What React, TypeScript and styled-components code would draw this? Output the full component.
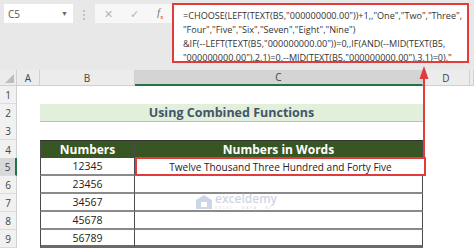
import React from 'react';
import styled, { createGlobalStyle } from 'styled-components';

const GlobalStyle = createGlobalStyle`
  html, body {
    margin: 0;
    padding: 0;
    background: #ffffff;
  }
`;

const COLS = '17px 23px 95px 288px 47px 1fr';

const Page = styled.div`
  position: relative;
  width: 474px;
  height: 250px;
  overflow: hidden;
  background: #ffffff;
  font-family: "Open Sans", "Noto Sans", sans-serif;
`;

const FormulaBar = styled.div`
  display: flex;
  align-items: flex-start;
  height: 70px;
  padding: 3px 0 0 4px;
  box-sizing: border-box;
  background: #e8e8e8;
`;

const NameBox = styled.div`
  display: flex;
  align-items: center;
  justify-content: space-between;
  width: 69px;
  height: 19px;
  margin-top: 1px;
  padding: 0 5px 0 4px;
  box-sizing: border-box;
  background: #ffffff;
  font-size: 10px;
  color: #555;
`;

const Caret = styled.span`
  font-size: 7px;
  color: #666;
`;

const Dots = styled.div`
  display: flex;
  flex-direction: column;
  align-items: center;
  gap: 2px;
  width: 22px;
  margin-top: 7px;

  span {
    width: 2px;
    height: 2px;
    border-radius: 50%;
    background: #b5b5b5;
  }
`;

const ButtonBox = styled.div`
  display: flex;
  align-items: center;
  justify-content: space-around;
  width: 77px;
  height: 19px;
  margin-top: 1px;
  background: #f7f7f7;
  color: #b5b5b5;
  font-size: 11px;
`;

const Fx = styled.span`
  font-family: "Liberation Serif", serif;
  font-style: italic;
  font-size: 11px;
  color: #777;

  sub {
    font-size: 6px;
    color: #d33;
    font-style: normal;
  }
`;

const FormulaBox = styled.div`
  width: 297px;
  height: 60px;
  padding: 4px 0 0 9px;
  box-sizing: border-box;
  overflow: hidden;
  background: #ffffff;
  border: 2px solid #e23b3b;
  font-family: "Open Sans", sans-serif;
  font-size: 9.1px;
  line-height: 14px;
  color: #333;
  white-space: pre;
`;

const Row = styled.div<{ $h?: number }>`
  display: grid;
  grid-template-columns: ${COLS};
  height: ${(p) => p.$h ?? 18}px;
`;

const ColHead = styled.div<{ $active?: boolean }>`
  display: flex;
  align-items: center;
  justify-content: center;
  background: ${(p) => (p.$active ? '#d4d4d4' : '#ececec')};
  border-right: 1px solid #d0d0d0;
  border-bottom: ${(p) => (p.$active ? '2px solid #217346' : '1px solid #cfcfcf')};
  box-sizing: border-box;
  font-size: 10px;
  color: #444;
`;

const Corner = styled(ColHead)`
  justify-content: flex-end;
  align-items: flex-end;
  padding: 0 2px 2px 0;
`;

const RowHead = styled.div<{ $active?: boolean }>`
  display: flex;
  align-items: center;
  justify-content: center;
  background: ${(p) => (p.$active ? '#d8d8d8' : '#f1f1f1')};
  border-right: ${(p) => (p.$active ? '2px solid #217346' : '1px solid #d0d0d0')};
  border-bottom: 1px solid #dcdcdc;
  box-sizing: border-box;
  font-size: 10px;
  color: #444;
`;

const Blank = styled.div`
  background: #ffffff;
`;

const TitleCell = styled.div`
  grid-column: 3 / 5;
  display: flex;
  align-items: center;
  justify-content: center;
  background: #e2efda;
  border-bottom: 2px solid #a9c2e6;
  box-sizing: border-box;
  font-size: 12.5px;
  font-weight: 700;
  color: #44546a;
`;

const TCell = styled.div<{ $head?: boolean; $first?: boolean; $last?: boolean }>`
  display: flex;
  align-items: center;
  justify-content: center;
  box-sizing: border-box;
  background: ${(p) => (p.$head ? '#375623' : '#ffffff')};
  color: ${(p) => (p.$head ? '#ffffff' : '#222')};
  font-size: ${(p) => (p.$head ? '12px' : '10.5px')};
  font-weight: ${(p) => (p.$head ? 700 : 400)};
  border-right: 1px solid #4a4a4a;
  border-left: ${(p) => (p.$first ? '1px solid #4a4a4a' : 'none')};
  border-top: ${(p) => (p.$head ? '1px solid #333' : 'none')};
  border-bottom: ${(p) => (p.$last ? '3px solid #6a6a6a' : '2px solid #8a8a8a')};
`;

const Highlight = styled(TCell)`
  position: relative;
  z-index: 1;
  margin: -1px -3px 0 0;
  border: 2px solid #e23b3b;
  font-size: 10px;
`;

const Arrow = styled.svg`
  position: absolute;
  left: 418px;
  top: 64px;
`;

const Watermark = styled.div`
  position: absolute;
  left: 196px;
  top: 193px;
  display: flex;
  align-items: center;
  gap: 3px;
  opacity: 0.55;
  color: #a9b3d6;
  pointer-events: none;
`;

const MarkText = styled.div`
  display: flex;
  flex-direction: column;
  font-size: 12px;
  font-weight: 600;
  line-height: 12px;

  small {
    font-size: 4px;
    line-height: 5px;
    letter-spacing: 1.5px;
    font-weight: 400;
  }
`;

const numbers = ['12345', '23456', '34567', '45678', '56789'];

const formula = [
  '=CHOOSE(LEFT(TEXT(B5,"000000000.00"))+1,,"One","Two","Three",',
  '"Four","Five","Six","Seven","Eight","Nine")',
  '&IF(--LEFT(TEXT(B5,"000000000.00"))=0,,IF(AND(--MID(TEXT(B5,',
  '"000000000.00"),2,1)=0,--MID(TEXT(B5,"000000000.00"),3,1)=0),"',
];

const App = () => {
  return (
    <Page>
      <GlobalStyle />
      <FormulaBar>
        <NameBox>
          <span>C5</span>
          <Caret>▼</Caret>
        </NameBox>
        <Dots><span /><span /><span /></Dots>
        <ButtonBox>
          <span>✕</span>
          <span>✓</span>
          <Fx>f<sub>x</sub></Fx>
        </ButtonBox>
        <FormulaBox>{formula.join('\n')}</FormulaBox>
      </FormulaBar>

      <Row $h={16}>
        <Corner>
          <svg width="9" height="9" viewBox="0 0 9 9">
            <path d="M9 0 L9 9 L0 9 Z" fill="#bdbdbd" />
          </svg>
        </Corner>
        <ColHead>A</ColHead>
        <ColHead>B</ColHead>
        <ColHead $active>C</ColHead>
        <ColHead>D</ColHead>
        <ColHead />
      </Row>

      <Row>
        <RowHead>1</RowHead>
        <Blank /><Blank /><Blank /><Blank /><Blank />
      </Row>
      <Row>
        <RowHead>2</RowHead>
        <Blank />
        <TitleCell>Using Combined Functions</TitleCell>
        <Blank /><Blank />
      </Row>
      <Row>
        <RowHead>3</RowHead>
        <Blank /><Blank /><Blank /><Blank /><Blank />
      </Row>
      <Row>
        <RowHead>4</RowHead>
        <Blank />
        <TCell $head $first>Numbers</TCell>
        <TCell $head>Numbers in Words</TCell>
        <Blank /><Blank />
      </Row>
      {numbers.map((n, i) => (
        <Row key={n}>
          <RowHead $active={i === 0}>{i + 5}</RowHead>
          <Blank />
          <TCell $first $last={i === numbers.length - 1}>{n}</TCell>
          {i === 0 ? (
            <Highlight>Twelve Thousand Three Hundred and Forty Five</Highlight>
          ) : (
            <TCell $last={i === numbers.length - 1} />
          )}
          <Blank /><Blank />
        </Row>
      ))}

      <Arrow width="12" height="94" viewBox="0 0 12 94">
        <path d="M6 2 L10.5 15 L1.5 15 Z" fill="#e23b3b" />
        <rect x="5" y="14" width="2" height="80" fill="#e23b3b" />
      </Arrow>

      <Watermark>
        <svg width="16" height="14" viewBox="0 0 16 14">
          <path d="M8 0 L16 5 L16 14 L0 14 L0 5 Z" fill="#a9b3d6" />
          <path d="M5 7 L11 7 L11 12 L5 12 Z" fill="#ffffff" />
        </svg>
        <MarkText>
          exceldemy
          <small>EXCEL · DATA · BI</small>
        </MarkText>
      </Watermark>
    </Page>
  );
};

export default App;
